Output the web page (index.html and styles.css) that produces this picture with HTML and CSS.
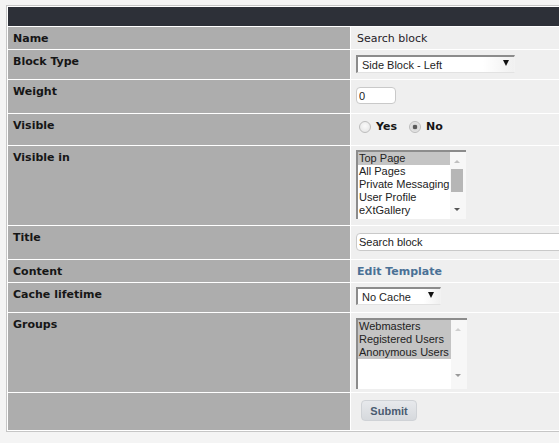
FILE: index.html
```html
<!DOCTYPE html>
<html>
<head>
<meta charset="utf-8">
<link rel="stylesheet" href="styles.css">
</head>
<body>
<table class="form">
  <colgroup>
    <col class="col-label">
    <col class="col-value">
  </colgroup>
  <tr><th class="head" colspan="2"></th></tr>
  <tr class="r-name">
    <td class="label">Name</td>
    <td class="value"><div class="text">Search block</div></td>
  </tr>
  <tr class="r-type">
    <td class="label">Block Type</td>
    <td class="value">
      <span class="selwrap w-type"><select class="sel"><option>Side Block - Left</option></select></span>
    </td>
  </tr>
  <tr class="r-weight">
    <td class="label">Weight</td>
    <td class="value"><input class="inp inp-weight" type="text" value="0"></td>
  </tr>
  <tr class="r-visible">
    <td class="label">Visible</td>
    <td class="value">
      <div class="radios">
        <label class="radio"><input type="radio" name="vis"> Yes</label>
        <label class="radio"><input type="radio" name="vis" checked> No</label>
      </div>
    </td>
  </tr>
  <tr class="r-visin">
    <td class="label">Visible in</td>
    <td class="value">
      <div class="listbox lb-visin">
        <div class="opts">
          <div class="opt on">Top Page</div>
          <div class="opt">All Pages</div>
          <div class="opt">Private Messaging</div>
          <div class="opt">User Profile</div>
          <div class="opt">eXtGallery</div>
        </div>
        <div class="sbar">
          <span class="arr up dark"></span>
          <span class="thumb"></span>
          <span class="arr down dark"></span>
        </div>
      </div>
    </td>
  </tr>
  <tr class="r-title">
    <td class="label">Title</td>
    <td class="value"><input class="inp inp-title" type="text" value="Search block"></td>
  </tr>
  <tr class="r-content">
    <td class="label">Content</td>
    <td class="value"><a class="link" href="#">Edit Template</a></td>
  </tr>
  <tr class="r-cache">
    <td class="label">Cache lifetime</td>
    <td class="value">
      <span class="selwrap w-cache"><select class="sel"><option>No Cache</option></select></span>
    </td>
  </tr>
  <tr class="r-groups">
    <td class="label">Groups</td>
    <td class="value">
      <div class="listbox lb-groups">
        <div class="opts">
          <div class="opt on">Webmasters</div>
          <div class="opt on">Registered Users</div>
          <div class="opt on">Anonymous Users</div>
        </div>
        <div class="sbar">
          <span class="arr up light"></span>
          <span class="arr down mid"></span>
        </div>
      </div>
    </td>
  </tr>
  <tr class="r-submit">
    <td class="label"></td>
    <td class="value"><button class="btn" type="button">Submit</button></td>
  </tr>
</table>
</body>
</html>
```

FILE: styles.css
```css
html, body {
  margin: 0;
  padding: 0;
  background: #f4f4f4;
  overflow: hidden;
}

.form {
  margin: 5px 0 0 6px;
  border: 1px solid #c6c6c6;
  border-spacing: 1px;
  background: #ffffff;
  box-shadow: 0 1px 0 #dcdcdc;
  table-layout: fixed;
  width: 611px;
}

.col-label { width: 342px; }
.col-value { width: 264px; }

.form td, .form th {
  padding: 0;
  vertical-align: top;
}

.head {
  background: #2d3038;
  height: 19px;
}

.label {
  background: #adadad;
  font: bold 11px/13px "DejaVu Sans", Verdana, sans-serif;
  color: #161616;
  padding: 5px 0 0 5px !important;
  box-sizing: border-box;
}

.value {
  background: #efefef;
  padding-left: 5px !important;
  box-sizing: border-box;
}

.r-name td { height: 22px; }
.r-type td { height: 29px; }
.r-weight td { height: 33px; }
.r-visible td { height: 31px; }
.r-visin td { height: 79px; }
.r-title td { height: 33px; }
.r-content td { height: 22px; }
.r-cache td { height: 29px; }
.r-groups td { height: 79px; }
.r-submit td { height: 37px; }

.text {
  font: 11px/13px "DejaVu Sans", Verdana, sans-serif;
  color: #262228;
  padding: 5px 0 0 1px;
}

/* selects */
.selwrap {
  position: relative;
  display: inline-block;
  margin-top: 5px;
}
.w-cache { margin-top: 4px; }

.sel {
  appearance: none;
  -webkit-appearance: none;
  display: block;
  height: 18px;
  box-sizing: border-box;
  border-top: 2px solid #8c8c8c;
  border-left: 2px solid #8c8c8c;
  border-right: 1px solid #f2f2f2;
  border-bottom: 1px solid #e2e2e2;
  border-radius: 0;
  background: linear-gradient(to right, #ffffff 80%, #f0f0f0);
  font: 11px "Liberation Sans", Arial, sans-serif;
  color: #1e1e1e;
  padding: 0 0 0 4px;
  margin: 0;
  outline: none;
}
.w-type .sel { width: 159px; }
.w-cache .sel { width: 85px; }

.selwrap::after {
  content: "";
  position: absolute;
  top: 5px;
  right: 6px;
  border-left: 3px solid transparent;
  border-right: 3px solid transparent;
  border-top: 6px solid #111;
}
.w-cache::after { right: 7px; }

/* text inputs */
.inp {
  display: block;
  box-sizing: border-box;
  height: 17px;
  border: 1px solid #c9c9c9;
  border-radius: 4px;
  background: #ffffff;
  font: 11px "Liberation Sans", Arial, sans-serif;
  color: #222;
  padding: 0 0 0 2px;
  margin: 7px 0 0 0;
  outline: none;
}
.inp-weight { width: 40px; }
.inp-title { width: 250px; height: 18px; margin-top: 7px; }

/* radios */
.radios {
  display: flex;
  align-items: center;
  padding-top: 5px;
  padding-left: 3px;
}
.radio {
  display: flex;
  align-items: center;
  gap: 5px;
  font: bold 11px/13px "DejaVu Sans", Verdana, sans-serif;
  color: #161616;
}
.radio + .radio { margin-left: 12px; }
.radio input {
  appearance: none;
  -webkit-appearance: none;
  width: 12px;
  height: 12px;
  margin: 2px 0 0 0;
  border: 1px solid #bdbdbd;
  border-radius: 50%;
  box-sizing: border-box;
  background: radial-gradient(circle at 50% 40%, #fafafa, #e2e2e2);
}
.radio input:checked {
  background: radial-gradient(circle, #5a5a5a 0 2px, #d8d8d8 2.6px, #f2f2f2 100%);
}

/* listboxes */
.listbox {
  display: flex;
  box-sizing: border-box;
  border-top: 2px solid #8c8c8c;
  border-left: 2px solid #8c8c8c;
  background: #f9f9f9;
  font: 11px/13px "Liberation Sans", Arial, sans-serif;
  color: #222;
}
.lb-visin { width: 110px; height: 69px; margin-top: 4px; }
.lb-groups { width: 111px; height: 71px; margin-top: 5px; }

.opts {
  flex: 1;
  background: #fff;
}
.opt {
  height: 13px;
  padding-left: 1px;
  white-space: nowrap;
}
.opt.on { background: #c4c4c4; }

.sbar {
  width: 16px;
  position: relative;
  background: #f7f7f7;
}
.arr {
  position: absolute;
  left: 4px;
  width: 0;
  height: 0;
  border-left: 3px solid transparent;
  border-right: 3px solid transparent;
}
.arr.up { top: 8px; border-bottom: 3px solid #c0c0c0; }
.arr.down { bottom: 8px; border-top: 3px solid #555; }
.arr.up.light { border-bottom-color: #cfcfcf; }
.arr.down.mid { border-top-color: #9a9a9a; bottom: 12px; }
.thumb {
  position: absolute;
  top: 17px;
  left: 1px;
  width: 12px;
  height: 23px;
  background: #b6b6b6;
}

/* link */
.link {
  display: inline-block;
  margin: 5px 0 0 1px;
  font: bold 11px/13px "DejaVu Sans", Verdana, sans-serif;
  color: #4a7196;
  text-decoration: none;
}

/* button */
.btn {
  display: block;
  margin: 7px 0 0 5px;
  width: 56px;
  height: 21px;
  box-sizing: border-box;
  border: 1px solid #cfd2d6;
  border-radius: 4px;
  background: linear-gradient(#e7e9ec, #d6d9dd);
  font: bold 11px "Liberation Sans", Arial, sans-serif;
  color: #4a5b70;
  padding: 0;
}
```
